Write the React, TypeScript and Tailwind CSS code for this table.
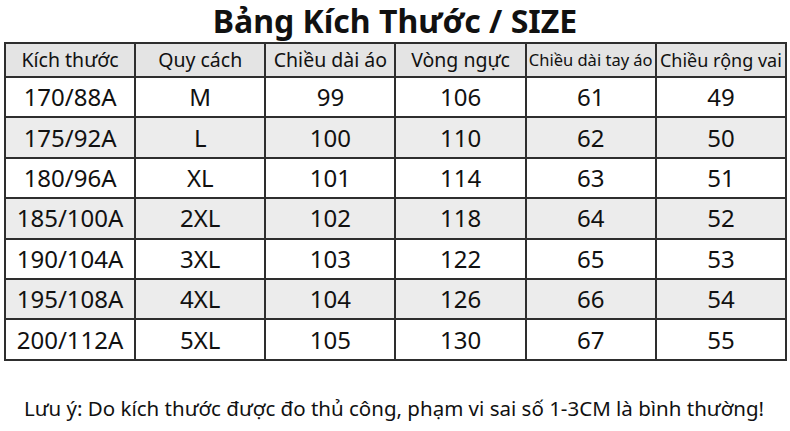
const headers: { label: string; size: string }[] = [
  { label: "Kích thước", size: "text-[19.5px]" },
  { label: "Quy cách", size: "text-[19.5px]" },
  { label: "Chiều dài áo", size: "text-[19.5px]" },
  { label: "Vòng ngực", size: "text-[19.5px]" },
  { label: "Chiều dài tay áo", size: "text-[16.5px]" },
  { label: "Chiều rộng vai", size: "text-[18px]" },
];

const rows: string[][] = [
  ["170/88A", "M", "99", "106", "61", "49"],
  ["175/92A", "L", "100", "110", "62", "50"],
  ["180/96A", "XL", "101", "114", "63", "51"],
  ["185/100A", "2XL", "102", "118", "64", "52"],
  ["190/104A", "3XL", "103", "122", "65", "53"],
  ["195/108A", "4XL", "104", "126", "66", "54"],
  ["200/112A", "5XL", "105", "130", "67", "55"],
];

export default function App() {
  return (
    <div
      className="w-[790px] h-[431px] bg-white text-[#111] overflow-hidden"
      style={{ fontFamily: '"Noto Sans", "Open Sans", sans-serif' }}
    >
      <h1 className="h-[42px] text-center text-[32px] font-bold leading-[42px]">
        Bảng Kích Thước / SIZE
      </h1>

      <table className="ml-[4px] w-[783px] table-fixed border-collapse border-2 border-[#2e2e2e]">
        <thead>
          <tr className="h-[34px] bg-[#e4e4e4]">
            {headers.map((h) => (
              <th
                key={h.label}
                className={`border-2 border-[#2e2e2e] p-0 text-center font-normal leading-none whitespace-nowrap ${h.size}`}
              >
                {h.label}
              </th>
            ))}
          </tr>
        </thead>
        <tbody>
          {rows.map((r, i) => (
            <tr
              key={r[0]}
              className={`h-[40.4px] ${i % 2 === 1 ? "bg-[#ececec]" : "bg-white"}`}
            >
              {r.map((c, j) => (
                <td
                  key={j}
                  className="border-2 border-[#2e2e2e] p-0 text-center text-[24px] leading-none"
                >
                  {c}
                </td>
              ))}
            </tr>
          ))}
        </tbody>
      </table>

      <p className="mt-[37px] pl-[24px] text-[20.5px] leading-none whitespace-nowrap">
        Lưu ý: Do kích thước được đo thủ công, phạm vi sai số 1-3CM là bình thường!
      </p>
    </div>
  );
}
